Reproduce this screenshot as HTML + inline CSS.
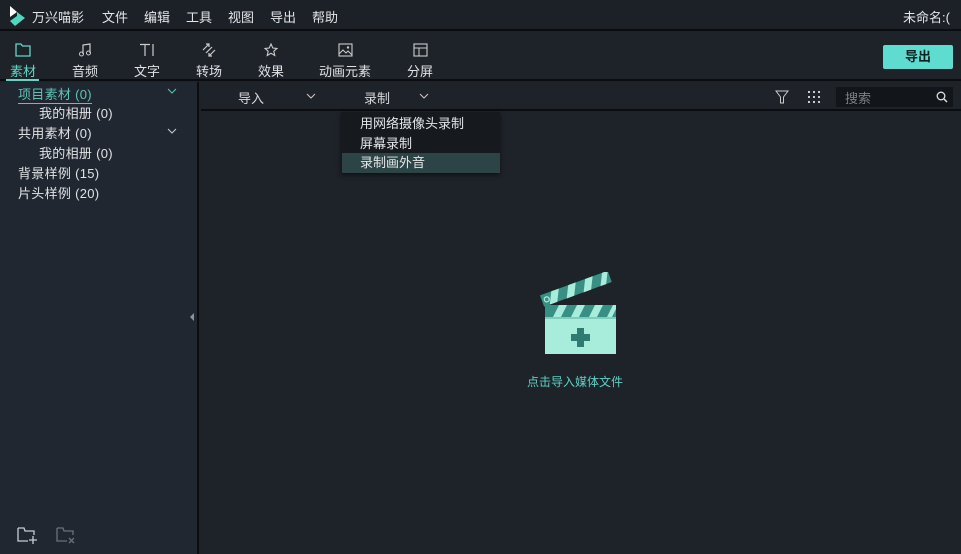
<!DOCTYPE html>
<html><head><meta charset="utf-8"><style>
*{margin:0;padding:0;box-sizing:border-box}
body{width:961px;height:554px;overflow:hidden;background:#1e2229;font-family:"Liberation Sans","Noto Sans CJK SC",sans-serif;color:#d8dadd;font-size:13px;position:relative}
.abs{position:absolute}
#title{left:0;top:0;width:961px;height:31px;background:#1c2027;border-bottom:2px solid #0b0d10}
#title span{position:absolute;top:7px;font-size:13px;color:#e4e6e8}
#tool{left:0;top:32px;width:961px;height:49px;background:#1e2229;border-bottom:2px solid #0b0d10}
.tab{position:absolute;top:0;text-align:center;font-size:13px;color:#e0e2e4}
.tab svg{display:block;margin:11px auto 4px}
#side{left:0;top:82px;width:199px;height:472px;background:#212731;border-right:2px solid #0b0d10}
#side div{position:absolute;font-size:13px;color:#e0e2e4;letter-spacing:0.3px}
#bar{left:201px;top:82px;width:760px;height:29px;background:#1e2229;border-bottom:2px solid #0b0d10}
#menu{left:341px;top:112px;width:159px;height:61px;background:#161a1f;box-shadow:0 2px 4px rgba(0,0,0,.5)}
#menu div{position:absolute;left:19px;font-size:13px;color:#e4e6e8}
</style></head><body>
<div id="title" class="abs">
<svg class="abs" style="left:7px;top:5px" width="20" height="22" viewBox="0 0 20 22"><path d="M3 1 L10 7 L3 12 Z" fill="#fff"/><path d="M10 7 L18 13 L8 21 L3 16 L10 11 Z" fill="#4fd8bf"/></svg>
<span style="left:32px">万兴喵影</span><span style="left:102px">文件</span><span style="left:144px">编辑</span><span style="left:186px">工具</span><span style="left:228px">视图</span><span style="left:270px">导出</span><span style="left:312px">帮助</span>
<span style="left:903px">未命名:(</span>
</div>
<div id="tool" class="abs">
<div class="tab" style="left:8px;width:30px;color:#5fd9c6"><svg width="16" height="14" viewBox="0 0 16 14"><path d="M1 1h5l1.5 2H15v10H1z" fill="none" stroke="#5fd9c6" stroke-width="1.3"/></svg>素材</div>
<div class="abs" style="left:6px;top:47px;width:33px;height:2px;background:#5fd9c6"></div>
<div class="tab" style="left:70px;width:30px"><svg width="14" height="14" viewBox="0 0 14 14"><path d="M5 11V2l7-1v9" fill="none" stroke="#ccc" stroke-width="1.2"/><circle cx="3.5" cy="11" r="2" fill="none" stroke="#ccc"/><circle cx="10.5" cy="10" r="2" fill="none" stroke="#ccc"/></svg>音频</div>
<div class="tab" style="left:132px;width:30px"><svg width="16" height="14" viewBox="0 0 16 14"><path d="M1 1.5h10M6 1.5V13M14 1v12" stroke="#ccc" stroke-width="1.2" fill="none"/></svg>文字</div>
<div class="tab" style="left:194px;width:30px"><svg width="14" height="14" viewBox="0 0 14 14"><path d="M1 7L7 1M4 1h3v3M13 7L7 13M10 13H7v-3M4 10L10 4" stroke="#ccc" stroke-width="1.2" fill="none"/></svg>转场</div>
<div class="tab" style="left:256px;width:30px"><svg width="14" height="14" viewBox="0 0 14 14"><path d="M7 1l1.8 4 4.2.4-3.2 2.8 1 4.3L7 10.3 3.2 12.5l1-4.3L1 5.4l4.2-.4z" stroke="#ccc" stroke-width="1.1" fill="none"/></svg>效果</div>
<div class="tab" style="left:318px;width:54px"><svg width="15" height="14" viewBox="0 0 15 14"><rect x="1" y="1" width="13" height="12" fill="none" stroke="#ccc" stroke-width="1.1"/><path d="M1 11l4-4 3 3 2-2 4 4" stroke="#ccc" fill="none"/><circle cx="10" cy="4.5" r="1.2" fill="#ccc"/></svg>动画元素</div>
<div class="tab" style="left:405px;width:30px"><svg width="15" height="14" viewBox="0 0 15 14"><rect x="1" y="1" width="13" height="12" fill="none" stroke="#ccc" stroke-width="1.1"/><path d="M1 5h13M6 5v8" stroke="#ccc" fill="none"/></svg>分屏</div>
<div class="abs" style="left:883px;top:13px;width:70px;height:24px;background:#5fdcd0;border-radius:2px;color:#10201e;font-weight:bold;text-align:center;line-height:24px">导出</div>
</div>
<div id="side" class="abs">
<div style="left:18px;top:2px;color:#5fc3b6;border-bottom:1px solid #5fc3b6;padding-bottom:0">项目素材 (0)</div>
<div style="left:39px;top:21px">我的相册 (0)</div>
<div style="left:18px;top:41px">共用素材 (0)</div>
<div style="left:39px;top:61px">我的相册 (0)</div>
<div style="left:18px;top:81px">背景样例 (15)</div>
<div style="left:18px;top:101px">片头样例 (20)</div>
<svg class="abs" style="left:167px;top:6px" width="10" height="6" viewBox="0 0 10 6"><path d="M1 1l4 4 4-4" stroke="#5fc3b6" fill="none"/></svg>
<svg class="abs" style="left:167px;top:46px" width="10" height="6" viewBox="0 0 10 6"><path d="M1 1l4 4 4-4" stroke="#ccc" fill="none"/></svg>
<svg class="abs" style="left:189px;top:230px" width="6" height="10" viewBox="0 0 6 10"><path d="M5 1L1 5l4 4z" fill="#8893a3"/></svg>
<svg class="abs" style="left:17px;top:444px" width="22" height="20" viewBox="0 0 22 20"><path d="M1 2h6l1 3h9v4M1 2v13h10" stroke="#c8ccd2" stroke-width="1.3" fill="none"/><path d="M16 10v8M12 14h8" stroke="#c8ccd2" stroke-width="1.3"/></svg>
<svg class="abs" style="left:56px;top:444px" width="22" height="20" viewBox="0 0 22 20"><path d="M1 2h6l1 3h9v4M1 2v13h10" stroke="#6a717c" stroke-width="1.3" fill="none"/><path d="M13 12l5 5M18 12l-5 5" stroke="#6a717c" stroke-width="1.3"/></svg>
</div>
<div id="bar" class="abs">
<span class="abs" style="left:37px;top:6px">导入</span>
<svg class="abs" style="left:105px;top:11px" width="10" height="6" viewBox="0 0 10 6"><path d="M1 1l4 4 4-4" stroke="#ccc" fill="none"/></svg>
<span class="abs" style="left:163px;top:6px">录制</span>
<svg class="abs" style="left:218px;top:11px" width="10" height="6" viewBox="0 0 10 6"><path d="M1 1l4 4 4-4" stroke="#ccc" fill="none"/></svg>
<svg class="abs" style="left:574px;top:8px" width="14" height="14" viewBox="0 0 14 14"><path d="M1 1h12L8.5 7v6h-3V7z" stroke="#ccc" fill="none"/></svg>
<svg class="abs" style="left:606px;top:8px" width="14" height="14" viewBox="0 0 14 14" fill="#ccc"><rect x="1" y="1" width="2" height="2"/><rect x="6" y="1" width="2" height="2"/><rect x="11" y="1" width="2" height="2"/><rect x="1" y="6" width="2" height="2"/><rect x="6" y="6" width="2" height="2"/><rect x="11" y="6" width="2" height="2"/><rect x="1" y="11" width="2" height="2"/><rect x="6" y="11" width="2" height="2"/><rect x="11" y="11" width="2" height="2"/></svg>
<div class="abs" style="left:635px;top:5px;width:117px;height:20px;background:#121519"></div>
<span class="abs" style="left:644px;top:6px;color:#7b818a">搜索</span>
<svg class="abs" style="left:735px;top:9px" width="12" height="12" viewBox="0 0 12 12"><circle cx="5" cy="5" r="3.8" stroke="#ddd" stroke-width="1.3" fill="none"/><path d="M8 8l3 3" stroke="#ddd" stroke-width="1.5"/></svg>
</div>
<div id="menu" class="abs">
<div style="top:1px">用网络摄像头录制</div>
<div style="top:21px">屏幕录制</div>
<div class="abs" style="left:1px!important;top:41px;width:158px;height:20px;background:#2c4446"></div>
<div style="top:40px">录制画外音</div>
</div>
<svg class="abs" style="left:540px;top:272px" width="82" height="86" viewBox="0 0 82 86">
<g transform="rotate(-20 6 34)">
<rect x="4" y="22" width="72" height="12" fill="#3a8f85"/>
<path d="M16 22h8l-6 12h-8zM34 22h8l-6 12h-8zM52 22h8l-6 12h-8zM70 22h6l-6 12h-6z" fill="#a8ecdc"/>
<circle cx="9" cy="28" r="2.5" fill="none" stroke="#a8ecdc" stroke-width="1.3"/>
</g>
<rect x="5" y="33" width="71" height="12" fill="#3a8f85"/>
<path d="M13 45l6-12h8l-6 12zM31 45l6-12h8l-6 12zM49 45l6-12h8l-6 12zM67 45l6-12h3v4l-4 8z" fill="#a8ecdc"/>
<rect x="5" y="45" width="71" height="37" fill="#a8ecdc"/>
<rect x="5" y="45" width="71" height="2" fill="#7fcdbd"/>
<path d="M37 56h7v6h6v7h-6v6h-7v-6h-6v-7h6z" fill="#2f7a72"/>
</svg>
<span class="abs" style="left:527px;top:373px;color:#5fd0c4;font-size:12px">点击导入媒体文件</span>
</body></html>
